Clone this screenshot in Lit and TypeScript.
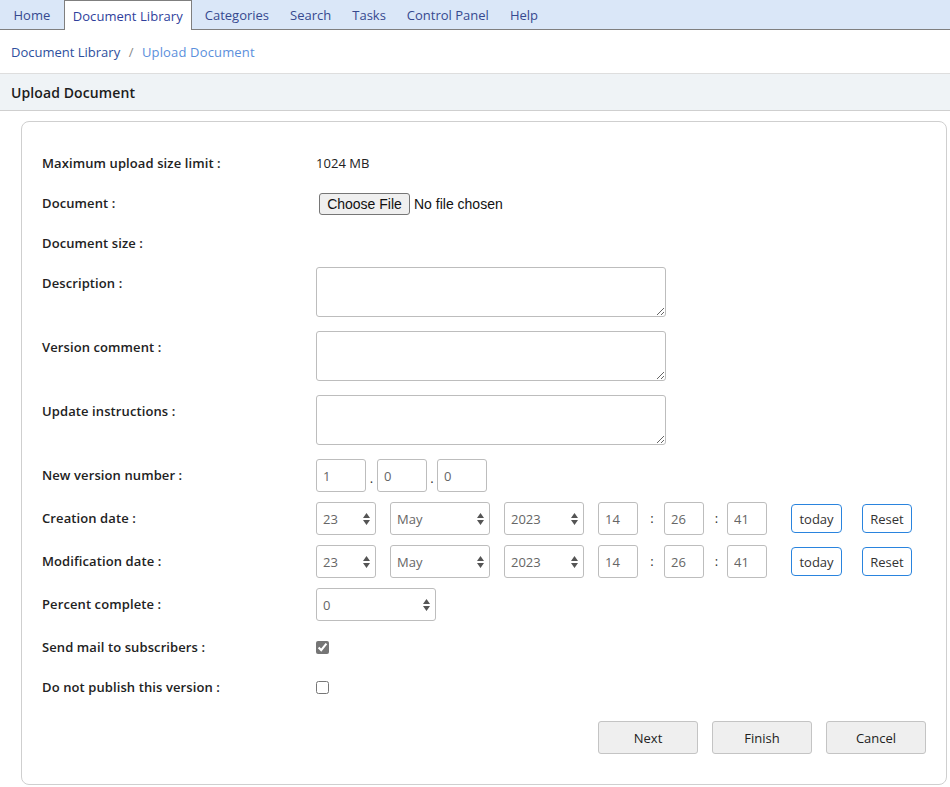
import { LitElement, html, css } from "lit";
import { customElement } from "lit/decorators.js";

const arrows = html`<svg class="arrows" width="7" height="12" viewBox="0 0 7 12" aria-hidden="true"><path d="M3.5 0 L7 5 H0 Z M0 7 H7 L3.5 12 Z" fill="#555"/></svg>`;

@customElement("app-root")
export class AppRoot extends LitElement {
  static styles = css`
    :host { display: block; font-family: "Open Sans", "Noto Sans", sans-serif; font-size: 13px; color: #212529; background: #fff; }
    * { box-sizing: border-box; }
    nav { display: flex; height: 30px; background: #dae7f8; border-bottom: 1px solid #7f7f7f; padding-left: 3px; }
    nav a { height: 29px; padding: 0 10.5px; line-height: 30px; color: #36498f; }
    nav a.active { width: 128px; height: 30px; background: #fff; border: 1px solid #7f7f7f; border-bottom: none; padding: 0 0 0 8px; margin: 0 2.5px 0 3px; line-height: 31px; color: #2f3f9c; letter-spacing: 0.05px; }
    .crumbs { height: 43px; padding: 0 11px; display: flex; align-items: center; gap: 8.5px; }
    .crumbs a { color: #2d4f9e; }
    .crumbs span { color: #888; }
    .crumbs b { font-weight: 400; color: #5b8fdc; letter-spacing: 0.15px; }
    .head { height: 38px; background: #eff3f6; border-top: 1px solid #dedede; border-bottom: 1px solid #cfcfcf; padding: 0 11px; line-height: 37px; font-size: 14px; font-weight: 600; color: #1c1c1c; letter-spacing: 0.1px; }
    .card { margin: 10px 3px 0 21px; height: 664px; border: 1px solid #cfcfcf; border-radius: 8px; padding: 21px 20px 20px 20px; }
    .row { display: grid; grid-template-columns: 274px 1fr; height: 40px; align-items: center; }
    .row > label { font-weight: 600; color: #222; letter-spacing: 0.1px; }
    .area { height: 64px; align-items: start; padding-top: 4px; }
    .area > label { padding-top: 7px; }
    .field { height: 43px; padding-top: 4px; align-items: start; }
    .field > label { padding-top: 7px; }
    textarea, input.t, select { font: inherit; color: #666; background: #fff; border: 1px solid #bdbdbd; border-radius: 3px; margin: 0; }
    textarea { display: block; width: 350px; height: 50px; }
    input.t { height: 33px; padding: 0 6px; }
    .w50 { width: 50px; } .w40 { width: 40px; }
    .line { display: flex; align-items: flex-start; }
    .dot { width: 11px; text-align: center; line-height: 33px; padding-top: 3px; color: #333; }
    .dot + .t + .dot { width: 10px; }
    .colon1 { width: 26px; padding-left: 2px; text-align: center; line-height: 33px; color: #333; }
    .colon2 { width: 23px; padding-left: 2px; text-align: center; line-height: 33px; color: #333; }
    .sel { position: relative; display: block; height: 33px; margin-right: 14px; }
    .sel select { appearance: none; -webkit-appearance: none; width: 100%; height: 33px; padding: 0 6px; }
    .arrows { position: absolute; right: 6px; top: 11px; pointer-events: none; }
    .s60 { width: 60px; } .s100 { width: 100px; } .s80 { width: 80px; } .s120 { width: 120px; margin: 0; }
    .mini { height: 29px; margin-top: 2px; font: inherit; color: #333; background: #fff; border: 1px solid #2a84de; border-radius: 4px; padding: 0; }
    .today { width: 51px; margin-left: 24px; }
    .reset { width: 50px; margin-left: 20px; }
    .file { padding-top: 2px; }
    input[type="file"] { font-family: "Liberation Sans", Arial, sans-serif; font-size: 14px; color: #111; margin-left: 3px; }
    input[type="file"]::file-selector-button { font: inherit; height: 22px; width: 91px; padding: 0; margin-right: 4px; background: #efefef; border: 1px solid #767676; border-radius: 3px; color: #111; }
    input[type="checkbox"] { width: 13px; height: 13px; margin: 0; display: block; accent-color: #757575; }
    .mb { font-size: 13px; color: #222; letter-spacing: 0.05px; }
    .actions { display: flex; justify-content: flex-end; gap: 14px; margin-top: 14px; }
    .actions button { width: 100px; height: 33px; font: inherit; color: #222; background: #efefef; border: 1px solid #c4c4c4; border-radius: 3px; }
  `;

  private sel(v: string, cls: string) {
    return html`<span class="sel ${cls}"><select><option>${v}</option></select>${arrows}</span>`;
  }

  private dateRow(label: string) {
    return html`<div class="row field"><label>${label}</label>
      <div class="line">
        ${this.sel("23", "s60")}${this.sel("May", "s100")}${this.sel("2023", "s80")}
        <input class="t w40" value="14" /><span class="colon1">:</span>
        <input class="t w40" value="26" /><span class="colon2">:</span>
        <input class="t w40" value="41" />
        <button class="mini today">today</button><button class="mini reset">Reset</button>
      </div></div>`;
  }

  render() {
    return html`
      <nav>
        <a>Home</a><a class="active">Document Library</a><a>Categories</a><a>Search</a><a>Tasks</a><a>Control Panel</a><a>Help</a>
      </nav>
      <div class="crumbs"><a>Document Library</a><span>/</span><b>Upload Document</b></div>
      <div class="head">Upload Document</div>
      <div class="card">
        <div class="row"><label>Maximum upload size limit :</label><span class="mb">1024 MB</span></div>
        <div class="row"><label>Document :</label><div class="file"><input type="file" /></div></div>
        <div class="row"><label>Document size :</label><span></span></div>
        <div class="row area"><label>Description :</label><textarea></textarea></div>
        <div class="row area"><label>Version comment :</label><textarea></textarea></div>
        <div class="row area"><label>Update instructions :</label><textarea></textarea></div>
        <div class="row field"><label>New version number :</label>
          <div class="line">
            <input class="t w50" value="1" /><span class="dot">.</span>
            <input class="t w50" value="0" /><span class="dot">.</span>
            <input class="t w50" value="0" />
          </div></div>
        ${this.dateRow("Creation date :")}
        ${this.dateRow("Modification date :")}
        <div class="row field"><label>Percent complete :</label><div class="line">${this.sel("0", "s120")}</div></div>
        <div class="row"><label>Send mail to subscribers :</label><input type="checkbox" checked /></div>
        <div class="row"><label>Do not publish this version :</label><input type="checkbox" /></div>
        <div class="actions"><button>Next</button><button>Finish</button><button>Cancel</button></div>
      </div>
    `;
  }
}
